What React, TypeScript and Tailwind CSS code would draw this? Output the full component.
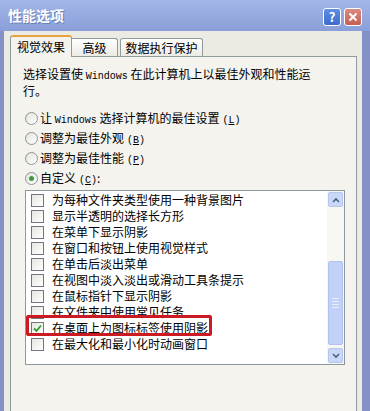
import React from "react";

const items = [
  "为每种文件夹类型使用一种背景图片",
  "显示半透明的选择长方形",
  "在菜单下显示阴影",
  "在窗口和按钮上使用视觉样式",
  "在单击后淡出菜单",
  "在视图中淡入淡出或滑动工具条提示",
  "在鼠标指针下显示阴影",
  "在文件夹中使用常见任务",
  "在桌面上为图标标签使用阴影",
  "在最大化和最小化时动画窗口",
];

const Win = () => <span className="font-['Liberation_Mono',monospace] text-[10px]">Windows</span>;

const Key = ({ k }: { k: string }) => (
  <span className="font-['Liberation_Mono',monospace] text-[10px] ml-[3px]">
    (<u>{k}</u>)
  </span>
);

const Radio = ({ checked, children }: { checked?: boolean; children: React.ReactNode }) => (
  <div className="h-[20px] flex items-center">
    <span className="ml-[2px] w-[13px] h-[13px] rounded-full border border-[#8d949c] bg-linear-to-br from-[#e4e4dc] to-white flex items-center justify-center">
      {checked && <span className="w-[5px] h-[5px] rounded-full bg-[#3c9c3c]" />}
    </span>
    <span className="ml-[2px]">{children}</span>
  </div>
);

const Check = ({ checked }: { checked?: boolean }) => (
  <span className="w-[13px] h-[13px] border border-[#6f7882] bg-linear-to-br from-[#e6e6df] to-white flex items-center justify-center shrink-0">
    {checked && (
      <svg width="9" height="9" viewBox="0 0 9 9">
        <path d="M1 4.5 L3.5 7 L8 1.5" fill="none" stroke="#2f9a2f" strokeWidth="1.8" />
      </svg>
    )}
  </span>
);

const Chevron = ({ up }: { up?: boolean }) => (
  <svg width="8" height="6" viewBox="0 0 8 6">
    <path d={up ? "M1 5 L4 2 L7 5" : "M1 1 L4 4 L7 1"} fill="none" stroke="#4d6185" strokeWidth="1.6" />
  </svg>
);

export default function App() {
  return (
    <div className="w-[370px] h-[411px] overflow-hidden bg-[#8491c6] flex flex-col font-['Noto_Sans_CJK_SC','Liberation_Sans',sans-serif] text-[12px] text-black">
      {/* title bar */}
      <div className="h-[31px] shrink-0 bg-linear-to-b from-[#a3b6e8] to-[#8a9ed8] flex items-center justify-between pl-[8px] pr-[8px]">
        <span className="text-[14px] font-bold text-white [text-shadow:1px_1px_0_#6b7fb8]">性能选项</span>
        <div className="flex items-center gap-[3px] mt-[2px]">
          <div className="w-[18px] h-[18px] rounded-[3px] border border-white bg-linear-to-b from-[#5e8ee6] to-[#3c6bcc] text-white text-[13px] font-bold flex items-center justify-center leading-none">
            ?
          </div>
          <div className="w-[18px] h-[18px] rounded-[3px] border border-white bg-linear-to-b from-[#d98a80] to-[#c65e52] flex items-center justify-center">
            <svg width="10" height="10" viewBox="0 0 10 10">
              <path d="M1.5 1.5 L8.5 8.5 M8.5 1.5 L1.5 8.5" stroke="white" strokeWidth="2" />
            </svg>
          </div>
        </div>
      </div>

      {/* body */}
      <div className="flex-1 flex flex-col ml-[4px] mr-[8px] bg-[#ecebe3] pl-[6px] pr-[5px] pt-[4px]">
        {/* tabs */}
        <div className="flex items-end h-[21px] relative z-10">
          <div className="w-[62px] h-[22px] -mb-[1px] bg-[#f4f3ee] border-x border-[#919b9c] rounded-t-[3px] border-t-[2px] border-t-[#e8a43c] flex items-center justify-center pb-[1px]">
            视觉效果
          </div>
          <div className="w-[46px] h-[18px] bg-linear-to-b from-white to-[#ebeae4] border-t border-r border-[#919b9c] rounded-tr-[3px] flex items-center justify-center">
            高级
          </div>
          <div className="ml-[2px] w-[83px] h-[18px] bg-linear-to-b from-white to-[#ebeae4] border-t border-x border-[#919b9c] rounded-t-[3px] flex items-center justify-center">
            数据执行保护
          </div>
        </div>

        {/* panel */}
        <div className="flex-1 border border-b-0 border-[#919b9c] bg-[#f4f3ee] pl-[12px] pt-[10px]">
          <div className="leading-[14px]">
            选择设置使 <Win /> 在此计算机上以最佳外观和性能运
            <br />
            行。
          </div>
          <div className="mt-[10px]">
            <Radio>
              让 <Win /> 选择计算机的最佳设置
              <Key k="L" />
            </Radio>
            <Radio>
              调整为最佳外观
              <Key k="B" />
            </Radio>
            <Radio>
              调整为最佳性能
              <Key k="P" />
            </Radio>
            <Radio checked>
              自定义
              <Key k="C" />:
            </Radio>
          </div>

          {/* list box */}
          <div className="mt-[2px] ml-[2px] w-[320px] h-[175px] border border-[#8e969e] bg-white flex">
            <div className="flex-1 pt-[1px] relative">
              {items.map((t, i) => (
                <div key={t} className="h-[16px] flex items-center pl-[5px]">
                  <Check checked={i === 8} />
                  <span className="ml-[8px] leading-none">{t}</span>
                </div>
              ))}
              <div className="absolute left-0 top-[124px] w-[186px] h-[21px] border-[3px] border-[#cc1a22] rounded-[2px]" />
            </div>
            <div className="w-[17px] flex flex-col p-[1px] bg-[#f7f7f3]">
              <div className="h-[15px] rounded-[2px] border border-[#b4c5ee] bg-[#c9d8f8] flex items-center justify-center">
                <Chevron up />
              </div>
              <div className="flex-1 flex flex-col">
                <div className="h-[54px]" />
                <div className="h-[84px] rounded-[2px] border border-[#b0c2ee] bg-[#c1d1f7] flex flex-col items-center justify-center gap-[2px]">
                  <span className="w-[7px] h-px bg-[#e8eefc]" />
                  <span className="w-[7px] h-px bg-[#e8eefc]" />
                  <span className="w-[7px] h-px bg-[#e8eefc]" />
                  <span className="w-[7px] h-px bg-[#e8eefc]" />
                </div>
              </div>
              <div className="h-[15px] rounded-[2px] border border-[#b4c5ee] bg-[#c9d8f8] flex items-center justify-center">
                <Chevron />
              </div>
            </div>
          </div>
        </div>
      </div>
    </div>
  );
}
